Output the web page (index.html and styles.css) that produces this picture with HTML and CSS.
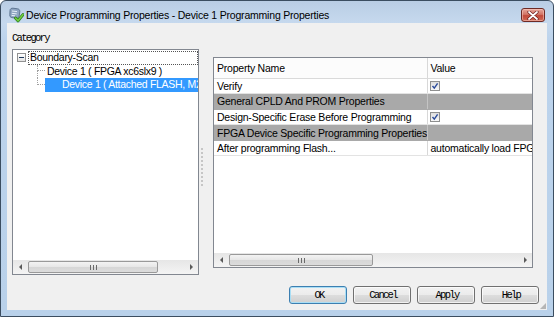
FILE: index.html
```html
<!DOCTYPE html>
<html lang="en">
<head>
    <meta charset="UTF-8">
    <title>Device Programming Properties</title>
    <link rel="stylesheet" href="styles.css">
</head>
<body>
    <div class="window">
        <div class="titlebar">
            <svg class="app-icon" width="16" height="16" viewBox="0 0 16 16">
                <path d="M2 3.5 C2 1.8 3.5 1 5 1.2 L9.5 1.8 C11.2 2 12 3.2 11.8 4.8 L11.2 9 C11 10.5 9.8 11.4 8.2 11.2 L3.8 10.6 C2.4 10.4 1.6 9.3 1.8 7.8 Z" fill="#8fa6c2" stroke="#4d6482" stroke-width="0.8"/>
                <path d="M4 4 L9 4.6 M3.8 6.3 L8.7 6.9 M3.6 8.4 L7 8.8" stroke="#e6eef7" stroke-width="1"/>
                <path d="M7.5 11 L10 13.8 L15 7.6" fill="none" stroke="#2d7a1c" stroke-width="3" stroke-linecap="round" stroke-linejoin="round"/>
                <path d="M7.5 11 L10 13.8 L15 7.6" fill="none" stroke="#6fcf3f" stroke-width="1.6" stroke-linecap="round" stroke-linejoin="round"/>
            </svg>
            <span class="title">Device Programming Properties - Device 1 Programming Properties</span>
            <div class="close-btn">
                <svg width="12" height="9" viewBox="0 0 12 9">
                    <path d="M2 1 L10 8 M10 1 L2 8" stroke="#6b1e1e" stroke-width="3.2" stroke-linecap="round"/>
                    <path d="M2 1 L10 8 M10 1 L2 8" stroke="#ffffff" stroke-width="1.8" stroke-linecap="round"/>
                </svg>
            </div>
        </div>

        <div class="client">
            <div class="category-label">Category</div>

            <div class="panes">
                <div class="tree-box">
                    <div class="tree-view">
                        <div class="tree-row">
                            <span class="expander"><span class="minus"></span></span>
                            <span class="node-label focused">Boundary-Scan</span>
                        </div>
                        <div class="tree-row">
                            <span class="indent-1"></span>
                            <span class="twig"><span class="twig-top"></span><span class="twig-bottom"></span></span>
                            <span class="node-label">Device 1 ( FPGA xc6slx9 )</span>
                        </div>
                        <div class="tree-row">
                            <span class="indent-1"></span>
                            <span class="twig"><span class="twig-top"></span><span class="twig-end"></span></span>
                            <span class="node-label selected">Device 1 ( Attached FLASH, M25P80 )</span>
                        </div>
                    </div>
                    <div class="hscroll">
                        <span class="scroll-btn"><span class="arrow-left"></span></span>
                        <span class="scroll-track">
                            <span class="thumb tree-thumb"><span class="grip"></span></span>
                        </span>
                        <span class="scroll-btn"><span class="arrow-right"></span></span>
                    </div>
                </div>

                <div class="splitter"><span class="splitter-dots"></span></div>

                <div class="props-box">
                    <div class="props-view">
                        <table class="prop-grid">
                            <colgroup>
                                <col class="col-name">
                                <col class="col-value">
                            </colgroup>
                            <tr class="head-row">
                                <th>Property Name</th>
                                <th>Value</th>
                            </tr>
                            <tr>
                                <td>Verify</td>
                                <td class="check-cell"><span class="checkbox"></span></td>
                            </tr>
                            <tr class="group-row">
                                <td>General CPLD And PROM Properties</td>
                                <td></td>
                            </tr>
                            <tr>
                                <td>Design-Specific Erase Before Programming</td>
                                <td class="check-cell"><span class="checkbox"></span></td>
                            </tr>
                            <tr class="group-row">
                                <td>FPGA Device Specific Programming Properties</td>
                                <td></td>
                            </tr>
                            <tr>
                                <td>After programming Flash...</td>
                                <td>automatically load FPGA</td>
                            </tr>
                        </table>
                    </div>
                    <div class="hscroll">
                        <span class="scroll-btn"><span class="arrow-left"></span></span>
                        <span class="scroll-track">
                            <span class="thumb props-thumb"><span class="grip"></span></span>
                        </span>
                        <span class="scroll-btn"><span class="arrow-right"></span></span>
                    </div>
                </div>
            </div>

            <div class="button-row">
                <button class="btn default">OK</button>
                <button class="btn">Cancel</button>
                <button class="btn">Apply</button>
                <button class="btn">Help</button>
            </div>
        </div>
    </div>
</body>
</html>
```

FILE: styles.css
```css
* {
    margin: 0;
    padding: 0;
    box-sizing: border-box;
}

body {
    width: 554px;
    height: 317px;
    overflow: hidden;
    background: #fff;
    font-family: "Liberation Sans", Arial, sans-serif;
    font-size: 10.5px;
    letter-spacing: -0.22px;
    color: #000;
}

/* window frame */
.window {
    width: 554px;
    height: 317px;
    display: flex;
    flex-direction: column;
    border: 1px solid #3b4d60;
    border-radius: 6px 6px 0 0;
    padding: 0 6px 6px 6px;
    background: linear-gradient(#b9cde4, #c6d9ee 22px, #bcd3ec 40px, #b9d1ea);
}

.titlebar {
    height: 22px;
    flex-shrink: 0;
    display: flex;
    align-items: center;
    padding: 6px 0 0 1px;
}

.app-icon {
    flex-shrink: 0;
    margin-top: -1px;
}

.title {
    margin-left: 2px;
    font-size: 10.5px;
    letter-spacing: -0.2px;
    color: #000;
    white-space: nowrap;
}

.close-btn {
    margin-left: auto;
    margin-right: 2px;
    align-self: flex-start;
    margin-top: 1px;
    width: 24px;
    height: 14px;
    border: 1px solid #6e2a24;
    border-radius: 3px;
    background: linear-gradient(#e6a79b, #d27566 45%, #c2493a 55%, #cf6a55);
    display: flex;
    align-items: center;
    justify-content: center;
    box-shadow: inset 0 0 0 1px rgba(255, 210, 200, 0.5);
}

/* client area */
.client {
    flex: 1;
    position: relative;
    display: flex;
    flex-direction: column;
    background: #f0f0f0;
    padding: 8px 8px 6px 5px;
}

.client::after {
    content: "";
    position: absolute;
    right: 1px;
    bottom: 1px;
    width: 6px;
    height: 6px;
    background: radial-gradient(circle, #b5b5b5 0.8px, transparent 1px) 0 0 / 2px 2px;
    clip-path: polygon(100% 0, 100% 100%, 0 100%);
}

.category-label,
.btn {
    font-family: "Liberation Mono", "Courier New", monospace;
    font-size: 10.5px;
    letter-spacing: -1.7px;
}

.category-label {
    height: 14px;
    line-height: 14px;
}

.panes {
    margin-top: 4px;
    display: flex;
    align-items: flex-start;
}

/* tree */
.tree-box {
    width: 187px;
    height: 226px;
    border: 1px solid #828790;
    background: #fff;
    display: flex;
    flex-direction: column;
}

.tree-view {
    flex: 1;
    padding-top: 1px;
    overflow: hidden;
    letter-spacing: -0.3px;
}

.tree-row {
    height: 13.5px;
    display: flex;
    align-items: stretch;
    white-space: nowrap;
}

.expander {
    width: 15px;
    flex-shrink: 0;
    display: flex;
    align-items: center;
    padding-left: 4px;
}

.minus {
    width: 9px;
    height: 9px;
    border: 1px solid #919191;
    background: linear-gradient(#fff, #e3e3e3);
    display: flex;
    align-items: center;
    justify-content: center;
}

.minus::before {
    content: "";
    width: 5px;
    height: 1px;
    background: #1e395b;
}

.node-label {
    display: flex;
    align-items: center;
    padding: 0 2px 0 2px;
    line-height: 13px;
}

.focused {
    flex: 1;
    outline: 1px dotted #555;
    outline-offset: -1px;
}

.selected {
    flex: 1;
    min-width: 0;
    overflow: hidden;
    background: #3399ff;
    color: #fff;
    padding-left: 17px;
}

.indent-1 {
    width: 24px;
    flex-shrink: 0;
}

.twig {
    width: 8px;
    flex-shrink: 0;
    display: flex;
    flex-direction: column;
}

.twig-top {
    height: 50%;
    border-left: 1px dotted #a0a0a0;
    border-bottom: 1px dotted #a0a0a0;
}

.twig-bottom {
    flex: 1;
    border-left: 1px dotted #a0a0a0;
}

.twig-end {
    flex: 1;
}

/* scrollbars */
.hscroll {
    height: 14px;
    flex-shrink: 0;
    display: flex;
    background: linear-gradient(#e6e6e6, #f4f4f4);
}

.scroll-btn {
    width: 14px;
    display: flex;
    align-items: center;
    justify-content: center;
}

.arrow-left {
    border-top: 3px solid transparent;
    border-bottom: 3px solid transparent;
    border-right: 3px solid #5a5a5a;
}

.arrow-right {
    border-top: 3px solid transparent;
    border-bottom: 3px solid transparent;
    border-left: 3px solid #5a5a5a;
}

.scroll-track {
    flex: 1;
    display: flex;
    padding: 1px 0 1px 1px;
}

.thumb {
    border: 1px solid #999;
    border-radius: 2px;
    background: linear-gradient(#f3f3f3, #e6e6e6 50%, #d6d6d6 51%, #dcdcdc);
    display: flex;
    align-items: center;
    justify-content: center;
}

.tree-thumb {
    width: 130px;
}

.props-thumb {
    width: 144px;
}

.grip {
    width: 7px;
    height: 5px;
    background: repeating-linear-gradient(to right, #6a6a6a 0 1px, transparent 1px 3px);
}

/* splitter */
.splitter {
    width: 14px;
    align-self: stretch;
    padding: 99px 0 0 2px;
}

.splitter-dots {
    display: block;
    width: 2px;
    height: 40px;
    background: repeating-linear-gradient(to bottom, #c6c6c6 0 2px, transparent 2px 4px);
}

/* property grid */
.props-box {
    margin-top: 8px;
    width: 320px;
    height: 211px;
    border: 1px solid #828790;
    background: #fff;
    display: flex;
    flex-direction: column;
}

.props-view {
    flex: 1;
    overflow: hidden;
}

.prop-grid {
    width: 318px;
    border-collapse: collapse;
    table-layout: fixed;
}

.col-name {
    width: 213px;
}

.col-value {
    width: 105px;
}

.prop-grid th,
.prop-grid td {
    text-align: left;
    font-weight: normal;
    white-space: nowrap;
    overflow: hidden;
    padding: 0 0 0 3px;
    border-bottom: 1px solid #e3e3e3;
    border-right: 1px solid #d8d8d8;
}

.prop-grid th {
    height: 20px;
    background: #fcfcfc;
    border-bottom: 1px solid #dadada;
}

.prop-grid td {
    height: 15.6px;
    line-height: 14px;
}

.prop-grid td:last-child,
.prop-grid th:last-child {
    border-right: none;
}

.group-row td {
    background: #a9a9a9;
    border-right-color: #c4c4c4;
    border-bottom-color: #a9a9a9;
}

.check-cell {
    padding-left: 2px !important;
}

.checkbox {
    display: block;
    width: 10px;
    height: 10px;
    border: 1px solid #8e8f8f;
    background:
        url("data:image/svg+xml,%3Csvg xmlns='http://www.w3.org/2000/svg' width='8' height='8'%3E%3Cpath d='M1.5 4 L3.3 6.2 L6.6 1.3' fill='none' stroke='%232a4a9a' stroke-width='1.4'/%3E%3C/svg%3E") center / 8px 8px no-repeat,
        linear-gradient(#dedede, #f8f8f8);
}

/* buttons */
.button-row {
    margin-top: auto;
    display: flex;
    justify-content: flex-end;
    gap: 6px;
}

.btn {
    width: 58px;
    height: 18px;
    border: 1px solid #707070;
    border-radius: 3px;
    background: linear-gradient(#f2f2f2, #ebebeb 50%, #dddddd 51%, #cfcfcf);
    box-shadow: inset 0 0 0 1px rgba(255, 255, 255, 0.7);
    color: #000;
    text-align: center;
    padding-left: 2px;
}

.btn.default {
    border-color: #3c7fb1;
    box-shadow: inset 0 0 0 1px #a9def5;
}
```
